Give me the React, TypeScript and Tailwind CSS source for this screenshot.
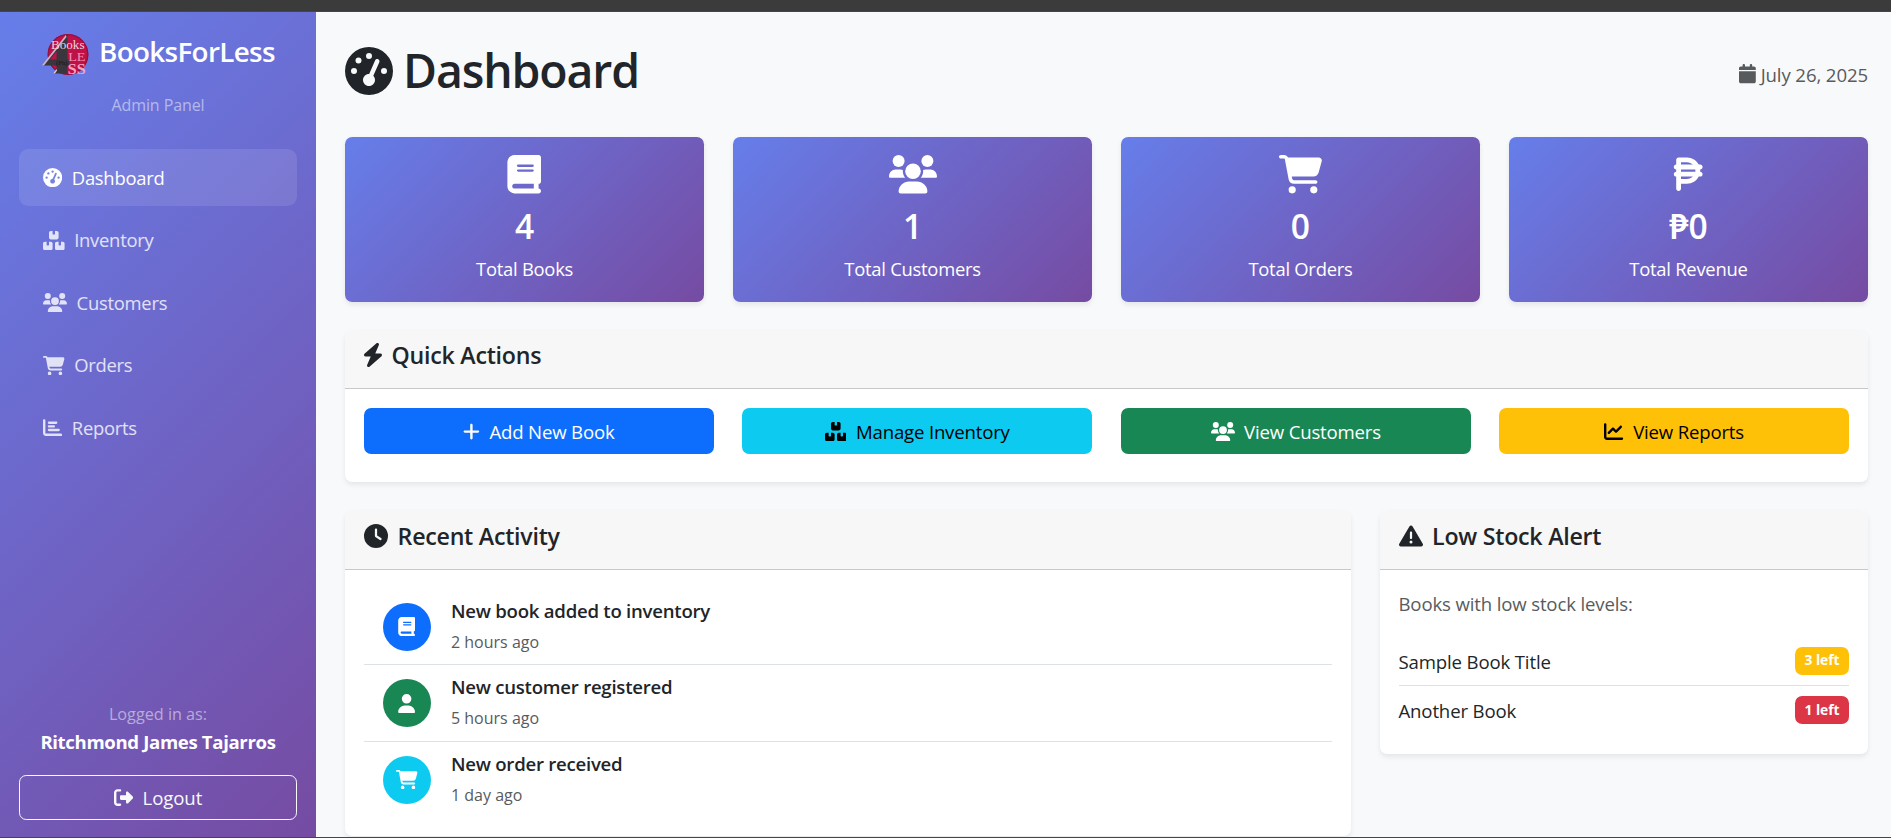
import type { ReactNode } from "react";
import {
  FaBolt,
  FaBook,
  FaCalendar,
  FaCartShopping,
  FaChartBar,
  FaChartLine,
  FaClock,
  FaGaugeHigh,
  FaPesoSign,
  FaPlus,
  FaRightFromBracket,
  FaTriangleExclamation,
  FaUser,
} from "react-icons/fa6";

function Boxes() {
  return (
    <svg viewBox="0 0 576 512" fill="currentColor" className="h-[1em] w-[1.125em]" aria-hidden="true">
      <path d="M160 48C160 21.49 181.5 0 208 0H256V80C256 88.84 263.2 96 272 96H304C312.8 96 320 88.84 320 80V0H368C394.5 0 416 21.49 416 48V176C416 202.5 394.5 224 368 224H208C181.5 224 160 202.5 160 176V48zM96 288V368C96 376.8 103.2 384 112 384H144C152.8 384 160 376.8 160 368V288H208C234.5 288 256 309.5 256 336V464C256 490.5 234.5 512 208 512H48C21.49 512 0 490.5 0 464V336C0 309.5 21.49 288 48 288H96zM416 288V368C416 376.8 423.2 384 432 384H464C472.8 384 480 376.8 480 368V288H528C554.5 288 576 309.5 576 336V464C576 490.5 554.5 512 528 512H368C341.5 512 320 490.5 320 464V336C320 309.5 341.5 288 368 288H416z" />
    </svg>
  );
}

function Users() {
  return (
    <svg viewBox="0 0 640 512" fill="currentColor" className="h-[1em] w-[1.25em]" aria-hidden="true">
      <circle cx="320" cy="216" r="104" />
      <circle cx="128" cy="80" r="80" />
      <circle cx="512" cy="80" r="80" />
      <path d="M369.9 352H270.1C191.6 352 128 411.7 128 485.3C128 500.1 140.7 512 156.4 512h327.2C499.3 512 512 500.1 512 485.3C512 411.7 448.4 352 369.9 352z" />
      <path d="M183.9 216c0-5.449 .9824-10.63 1.609-15.91C174.6 194.1 162.6 192 149.9 192H88.08C39.44 192 0 233.8 0 285.3C0 295.6 7.887 304 17.62 304h199.5C196.7 280.2 183.9 249.7 183.9 216z" />
      <path d="M551.9 192h-61.84c-12.8 0-24.88 3.037-35.86 8.24C454.8 205.5 455.8 210.6 455.8 216c0 33.71-12.78 64.21-33.16 88h199.7C632.1 304 640 295.6 640 285.3C640 233.8 600.6 192 551.9 192z" />
    </svg>
  );
}

function Logo() {
  return (
    <svg viewBox="0 0 48 44" className="mt-[2px] h-[44px] w-[48px] shrink-0" aria-hidden="true">
      <circle cx="27" cy="21.5" r="20.3" fill="#c01048" />
      <circle cx="27" cy="21.5" r="19.8" fill="none" stroke="#8f1240" strokeWidth="1.2" />
      <path d="M25.5 2 L1.5 32.5 H15.5 V36 L12 40.5 H26.5 V32.5 H28.5 V26.5 H26.5 V2 Z M15.5 18.5 V26.5 H9 Z" fillRule="evenodd" fill="#39363d" />
      <path d="M24.8 2 L0.8 32.5 H3 L25.5 4 Z" fill="#c9b3c9" />
      <path d="M15.5 36 L12 40.5 H14 L16 37.5 Z" fill="#e6c8d8" />
      <g fontFamily="Liberation Serif, serif">
        <text x="10" y="15.6" fontSize="13" textLength="33.5" lengthAdjust="spacingAndGlyphs" fill="#ecd3dd">Books</text>
        <text x="27.2" y="28.2" fontSize="13.5" textLength="17.3" lengthAdjust="spacingAndGlyphs" fill="#ee92b0">LE</text>
        <text x="15" y="31.5" fontSize="5.5" textLength="11.5" lengthAdjust="spacingAndGlyphs" fill="#17151b">(Ph)</text>
        <text x="26.8" y="40.8" fontSize="14.5" fontWeight="bold" textLength="17.8" lengthAdjust="spacingAndGlyphs" fill="#f7a3c0">SS</text>
      </g>
    </svg>
  );
}

const nav = [
  { label: "Dashboard", icon: <FaGaugeHigh />, active: true },
  { label: "Inventory", icon: <Boxes />, active: false },
  { label: "Customers", icon: <Users />, active: false },
  { label: "Orders", icon: <FaCartShopping className="w-[21.6px]" />, active: false },
  { label: "Reports", icon: <FaChartBar />, active: false },
];

function Sidebar() {
  return (
    <aside className="flex w-[316px] shrink-0 flex-col bg-[linear-gradient(135deg,#667eea_0%,#764ba2_100%)] px-[19px] pt-[19px] pb-[17px] text-white">
      <div className="flex h-[46px] items-center pl-[22px]">
        <Logo />
        <span className="ml-[10px] pb-[7px] text-[27.8px] leading-[36px] font-semibold tracking-[-0.65px]">BooksForLess</span>
      </div>
      <div className="mt-[16px] text-center text-[16px] leading-[25px] tracking-[-0.1px] text-white/50">Admin Panel</div>
      <nav className="mt-[31px] flex flex-col gap-[5.1px]">
        {nav.map((n) => (
          <a
            key={n.label}
            className={
              n.active
                ? "flex h-[57.4px] items-center gap-[9.6px] rounded-[9.6px] bg-white/10 px-[24px] text-[18.4px] text-white"
                : "flex h-[57.4px] items-center gap-[9.6px] rounded-[9.6px] px-[24px] text-[18.4px] text-white/80"
            }
          >
            <span className="flex text-[19.2px]">{n.icon}</span>
            <span className="tracking-[-0.25px]">{n.label}</span>
          </a>
        ))}
      </nav>
      <div className="mt-auto text-center">
        <div className="text-[16.2px] leading-[25px] text-white/50">Logged in as:</div>
        <div className="mt-[1px] text-[18.6px] leading-[28px] font-bold tracking-[-0.35px]">Ritchmond James Tajarros</div>
        <button className="mt-[19px] flex h-[45px] w-full items-center justify-center gap-[9.6px] rounded-[7.2px] border border-[#f8f9fa] text-[18.6px] text-[#f8f9fa]">
          <FaRightFromBracket className="text-[19.2px]" />
          <span className="tracking-[-0.1px]">Logout</span>
        </button>
      </div>
    </aside>
  );
}

function StatCard({ icon, value, label }: { icon: ReactNode; value: string; label: string }) {
  return (
    <div className="flex h-[165px] flex-col items-center rounded-[7.2px] bg-[linear-gradient(135deg,#667eea_0%,#764ba2_100%)] pt-[18.4px] text-white shadow-[0_2.4px_4.8px_rgba(0,0,0,0.075)]">
      <span className="flex text-[38.4px]">{icon}</span>
      <span className="mt-[12px] text-[33.6px] leading-[40px] font-semibold">{value}</span>
      <span className="mt-[8.6px] text-[18.4px] leading-[29px] tracking-[-0.25px]">{label}</span>
    </div>
  );
}

function Card({ icon, title, className, children }: { icon: ReactNode; title: string; className: string; children: ReactNode }) {
  return (
    <section className={`overflow-hidden rounded-[7.2px] bg-white shadow-[0_2.4px_4.8px_rgba(0,0,0,0.075)] ${className}`}>
      <div className="flex h-[58.5px] gap-[9.6px] border-b border-[#c8c8c8] bg-[#f7f7f7] px-[19px] pt-[10.6px] text-[23.2px] leading-[28px] font-semibold tracking-[-0.25px]">
        <span className="mt-[1.9px] flex h-[24px] text-[24px]">{icon}</span>
        <span>{title}</span>
      </div>
      {children}
    </section>
  );
}

const actions = [
  { label: "Add New Book", icon: <FaPlus className="w-[16.8px]" />, color: "bg-[#0d6efd] text-white" },
  { label: "Manage Inventory", icon: <Boxes />, color: "bg-[#0dcaf0] text-black" },
  { label: "View Customers", icon: <Users />, color: "bg-[#198754] text-white" },
  { label: "View Reports", icon: <FaChartLine />, color: "bg-[#ffc107] text-black" },
];

const activity = [
  { title: "New book added to inventory", time: "2 hours ago", icon: <FaBook />, color: "bg-[#0d6efd]" },
  { title: "New customer registered", time: "5 hours ago", icon: <FaUser />, color: "bg-[#198754]" },
  { title: "New order received", time: "1 day ago", icon: <FaCartShopping className="w-[21.6px]" />, color: "bg-[#0dcaf0]" },
];

const stock = [
  { title: "Sample Book Title", left: "3 left", color: "bg-[#ffc107]" },
  { title: "Another Book", left: "1 left", color: "bg-[#dc3545]" },
];

export default function App() {
  return (
    <div className="flex h-[838px] w-full flex-col overflow-hidden bg-[#f8f9fa] font-['Open_Sans','Noto_Sans',sans-serif] text-[#212529]">
      <div className="h-[12px] shrink-0 border-b border-[#464646] bg-[#3b3b3b]" />
      <div className="flex h-[825px]">
        <Sidebar />
        <main className="min-w-0 flex-1 bg-[#f8f9fb] pr-[23px] pl-[29px]">
          <header className="flex h-[125px] items-start justify-between pt-[29px]">
            <h1 className="flex items-center text-[46.4px] leading-[58px] font-semibold tracking-[-1.1px]">
              <FaGaugeHigh className="mt-[1px] mr-[10px] size-[48px]" />
              Dashboard
            </h1>
            <div className="mt-[19px] flex items-center gap-[5px] text-[18.6px] leading-[29px] text-[#585b5e]">
              <FaCalendar className="mb-[1px] h-[19.2px] w-[16.8px]" />
              <span className="tracking-[-0.1px]">July 26, 2025</span>
            </div>
          </header>

          <div className="grid grid-cols-4 gap-[28.8px]">
            <StatCard icon={<FaBook />} value="4" label="Total Books" />
            <StatCard icon={<Users />} value="1" label="Total Customers" />
            <StatCard icon={<FaCartShopping className="w-[43.2px]" />} value="0" label="Total Orders" />
            <StatCard icon={<FaPesoSign />} value="₱0" label="Total Revenue" />
          </div>

          <Card icon={<FaBolt viewBox="32 0 384 512" className="w-[18px]" />} title="Quick Actions" className="mt-[28.8px] h-[151.5px]">
            <div className="grid grid-cols-4 gap-[28.8px] px-[19px] pt-[19px]">
              {actions.map((a) => (
                <button key={a.label} className={`flex h-[46px] items-center justify-center gap-[9.6px] rounded-[7.2px] text-[18.6px] ${a.color}`}>
                  <span className="flex text-[19.2px]">{a.icon}</span>
                  <span className="pt-[1px] tracking-[-0.18px]">{a.label}</span>
                </button>
              ))}
            </div>
          </Card>

          <div className="mt-[28.8px] flex items-start gap-[29px]">
            <Card icon={<FaClock />} title="Recent Activity" className="h-[325px] w-[1005.5px]">
              <div className="px-[19px] pt-[19.1px]">
                {activity.map((a, i) => (
                  <div key={a.title} className={`flex h-[76.6px] pt-[10px] pl-[19px] ${i < 2 ? "border-b border-[#dee2e6]" : ""}`}>
                    <span className={`mt-[4px] flex size-[48px] items-center justify-center rounded-full text-[19.2px] text-white ${a.color}`}>{a.icon}</span>
                    <div className="ml-[20px] flex flex-col">
                      <span className="text-[18.6px] leading-[24px] font-semibold tracking-[-0.25px]">{a.title}</span>
                      <span className="mt-[7px] text-[16px] leading-[25px] text-[#585b5e]">{a.time}</span>
                    </div>
                  </div>
                ))}
              </div>
            </Card>
            <Card icon={<FaTriangleExclamation />} title="Low Stock Alert" className="h-[242.5px] flex-1">
              <div className="px-[19px] pt-[19px]">
                <p className="text-[18.6px] leading-[29px] tracking-[-0.15px] text-[#585b5e]">Books with low stock levels:</p>
                <div className="mt-[19px]">
                  {stock.map((s, i) => (
                    <div key={s.title} className={`flex h-[49px] items-center justify-between ${i === 0 ? "border-b border-[#dee2e6]" : ""}`}>
                      <span className="pt-[1px] text-[18.6px] leading-[29px] tracking-[-0.15px]">{s.title}</span>
                      <span className={`flex h-[28px] w-[54px] items-center justify-center rounded-[7.2px] pb-[1px] text-[13.8px] leading-none font-bold text-white ${s.color}`}>{s.left}</span>
                    </div>
                  ))}
                </div>
              </div>
            </Card>
          </div>
        </main>
      </div>
      <div className="h-px shrink-0 bg-[#464646]" />
    </div>
  );
}
